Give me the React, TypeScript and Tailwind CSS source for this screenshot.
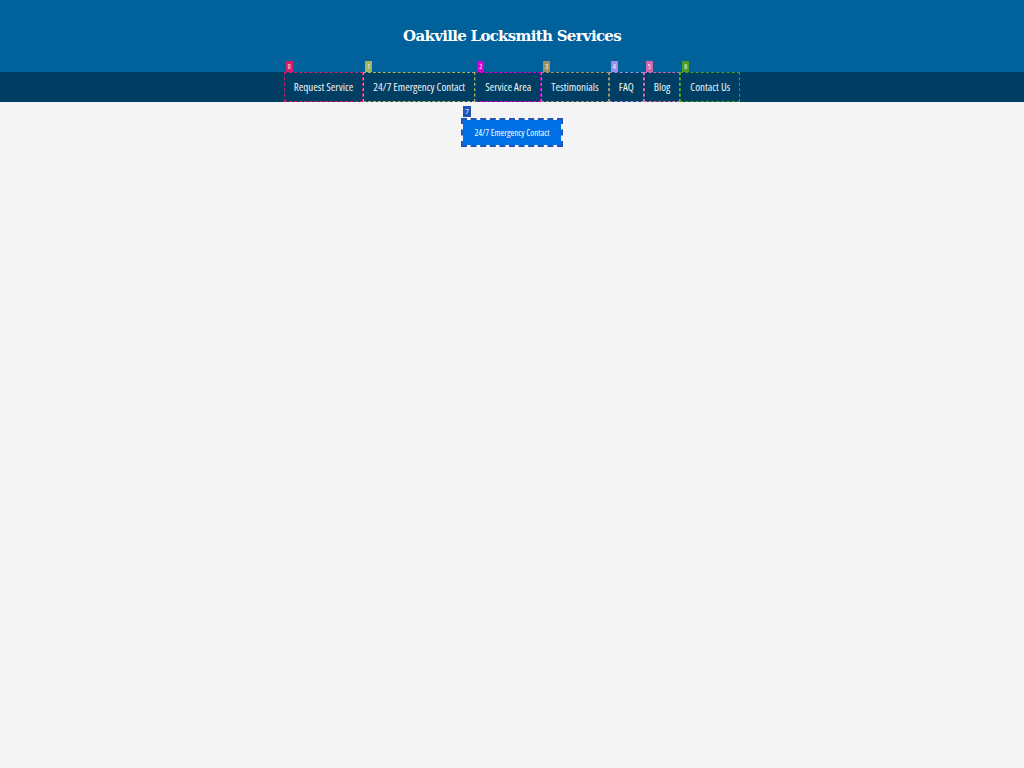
import React from "react";

const navItems = [
  { name: "Request Service", color: "#d21f6e" },
  { name: "24/7 Emergency Contact", color: "#a3b45f" },
  { name: "Service Area", color: "#d400d4" },
  { name: "Testimonials", color: "#9c9266" },
  { name: "FAQ", color: "#9b8fe6" },
  { name: "Blog", color: "#d066ac" },
  { name: "Contact Us", color: "#4c9b26" },
];

export default function App() {
  return (
    <div className="min-h-screen bg-[#f4f4f4] font-['Open_Sans',sans-serif]">
      {/* Header */}
      <header className="bg-[#00619b] h-[72px] flex items-center justify-center">
        <h1 className="text-white text-[15px] font-bold tracking-[-0.7px] font-['DejaVu_Serif',serif]">
          Oakville Locksmith Services
        </h1>
      </header>

      {/* Nav */}
      <nav className="bg-[#003f63] h-[30px] flex justify-center">
        <ul className="flex">
          {navItems.map((item, i) => (
            <li
              key={item.name}
              className="relative flex items-center px-[10px] outline-1 outline-dashed -outline-offset-1 text-[#eef3f7] text-[11px] [font-stretch:75%]"
              style={{ outlineColor: item.color }}
            >
              <span
                className="absolute -top-[11px] left-[2px] h-[11px] px-[2px] text-[7px] leading-[11px] text-white"
                style={{ backgroundColor: item.color }}
              >
                {i}
              </span>
              {item.name}
            </li>
          ))}
        </ul>
      </nav>

      {/* Emergency button */}
      <div className="flex justify-center pt-[16px]">
        <div className="relative">
          <button className="w-[98px] h-[25px] bg-[#0070e6] text-white text-[9px] [font-stretch:75%] outline-2 outline-dashed outline-[#1e56b8]">
            24/7 Emergency Contact
          </button>
          <span className="absolute -top-[12px] left-0 h-[11px] px-[2px] text-[7px] leading-[11px] text-white bg-[#1e56b8]">
            7
          </span>
        </div>
      </div>
    </div>
  );
}
